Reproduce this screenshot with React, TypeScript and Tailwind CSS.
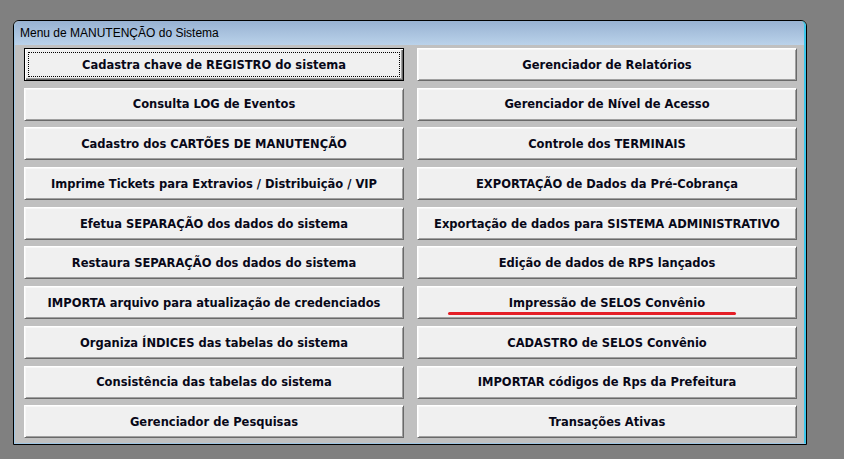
const left = [
  "Cadastra chave de REGISTRO do sistema",
  "Consulta LOG de Eventos",
  "Cadastro dos CARTÕES DE MANUTENÇÃO",
  "Imprime Tickets para Extravios / Distribuição / VIP",
  "Efetua SEPARAÇÃO dos dados do sistema",
  "Restaura SEPARAÇÃO dos dados do sistema",
  "IMPORTA arquivo para atualização de credenciados",
  "Organiza ÍNDICES das tabelas do sistema",
  "Consistência das tabelas do sistema",
  "Gerenciador de Pesquisas",
];

const right = [
  "Gerenciador de Relatórios",
  "Gerenciador de Nível de Acesso",
  "Controle dos TERMINAIS",
  "EXPORTAÇÃO de Dados da Pré-Cobrança",
  "Exportação de dados para SISTEMA ADMINISTRATIVO",
  "Edição de dados de RPS lançados",
  "Impressão de SELOS Convênio",
  "CADASTRO de SELOS Convênio",
  "IMPORTAR códigos de Rps da Prefeitura",
  "Transações Ativas",
];

function WinButton({ label, focused, marked }: { label: string; focused?: boolean; marked?: boolean }) {
  return (
    <button
      type="button"
      className={
        focused
          ? "relative flex h-[33px] w-full items-center justify-center border border-black bg-[#f0f0f0] shadow-[inset_1px_1px_#ffffff,inset_-1px_-1px_#696969,inset_-2px_-2px_#a0a0a0]"
          : "relative flex h-[33px] w-full items-center justify-center border border-t-white border-l-white border-r-[#696969] border-b-[#696969] bg-[#f0f0f0] shadow-[inset_1px_1px_#f8f8f8,inset_-1px_-1px_#a0a0a0]"
      }
    >
      {focused ? (
        <span className="absolute inset-[3px] border border-dotted border-black" />
      ) : null}
      <span className="pt-[2px] text-[11.5px] font-bold leading-none text-[#080818] [font-family:'DejaVu_Sans',sans-serif]">
        {label}
      </span>
      {marked ? (
        <span className="absolute left-[30px] top-[25px] h-[3px] w-[288px] rounded-full bg-[#e41e26]" />
      ) : null}
    </button>
  );
}

export default function App() {
  return (
    <div className="h-[459px] w-[844px] overflow-hidden bg-[#808080] pl-[13px] pt-[20px]">
      <div className="h-[425px] w-[794px] rounded-t-[6px] border border-black bg-[#c0c0c0]">
        <div className="flex h-full flex-col rounded-t-[5px] border-b border-l border-r-2 border-b-[#9fc6e4] border-l-[#9fc6e4] border-r-[#3cc6ea]">
          <div className="flex h-[24px] items-center rounded-t-[5px] bg-gradient-to-b from-[#98b2d2] to-[#bad2ea] pl-[5px]">
            <span className="text-[12px] text-black [font-family:'Liberation_Sans',sans-serif]">
              Menu de MANUTENÇÃO do Sistema
            </span>
          </div>
          <div className="flex flex-1 gap-[13px] pl-[9px] pr-[7px] pt-[3px]">
            <div className="flex w-[380px] flex-col gap-[6.7px]">
              {left.map((l, i) => (
                <WinButton key={l} label={l} focused={i === 0} />
              ))}
            </div>
            <div className="flex w-[380px] flex-col gap-[6.7px]">
              {right.map((l, i) => (
                <WinButton key={l} label={l} marked={i === 6} />
              ))}
            </div>
          </div>
        </div>
      </div>
    </div>
  );
}
